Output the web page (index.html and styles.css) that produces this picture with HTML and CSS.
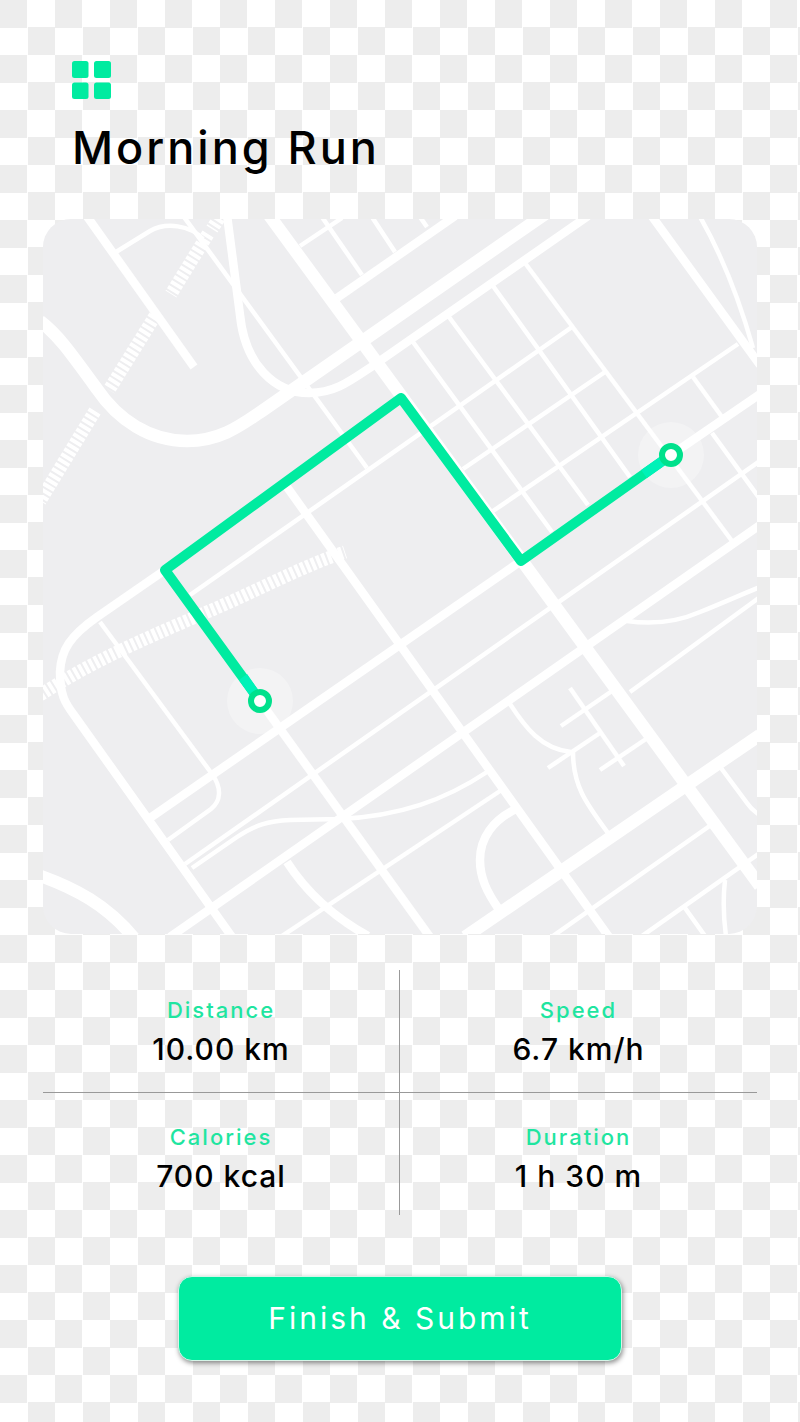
FILE: index.html
```html
<!DOCTYPE html>
<html lang="en">
<head>
<meta charset="utf-8">
<meta name="viewport" content="width=device-width, initial-scale=1">
<title>Morning Run</title>
<link rel="stylesheet" href="styles.css">
</head>
<body>
<main class="screen">
  <header class="header">
    <button class="menu" type="button" aria-label="Menu">
      <svg class="menu-icon" viewBox="0 0 40 39" aria-hidden="true">
        <rect x="0" y="0" width="16.500" height="17" rx="2.5"/>
        <rect x="22" y="0" width="17" height="17" rx="2.5"/>
        <rect x="0" y="21.500" width="16.500" height="16.500" rx="2.5"/>
        <rect x="22" y="21.500" width="17" height="16.500" rx="2.5"/>
      </svg>
    </button>
    <h1 class="title">Morning Run</h1>
  </header>

  <svg class="map" viewBox="43 219 714 715" role="img" aria-label="Route map">
    <g class="road minor">
      <path d="M116 252L150 231C166 222 190 225 203 239"/>
      <path d="M184 217L367 468"/>
      <path d="M300 246L342 218"/>
      <path d="M322 217L362 275"/>
      <path d="M372 217L395 252"/>
      <path d="M420 217L427 227"/>
      <path d="M413 342L552 532"/>
      <path d="M449 317L588 505"/>
      <path d="M493 286L630 477"/>
      <path d="M525 263L732 541"/>
      <path d="M190 595L572 327"/>
      <path d="M463 469L605 372"/>
      <path d="M493 511L738 344"/>
      <path d="M699 215C722 255 738 295 753 348"/>
      <path d="M693 377L722 417"/>
      <path d="M712 433L760 499"/>
      <path d="M185 864L760 461"/>
      <path d="M627 621C655 625 677 622 700 612C725 602 740 595 760 587"/>
      <path d="M630 692L760 597"/>
      <path d="M100 622L212 774C222 788 221 801 211 809L168 840"/>
      <path d="M192 868L237 837C255 825 268 821 290 820L340 819C400 816 445 800 487 772"/>
      <path d="M282 936L500 791"/>
      <path d="M510 704C525 727 541 749 571 752"/>
      <path d="M548 768L600 733"/>
      <path d="M570 688L624 766"/>
      <path d="M561 726L612 691"/>
      <path d="M600 770L646 739"/>
      <path d="M573 752C573 785 585 802 608 833"/>
      <path d="M721 768L747 803Q751 809 758 814"/>
      <path d="M553 936L711 825"/>
      <path d="M642 936L760 853"/>
      <path d="M685 908L705 936"/>
      <path d="M725 880Q722 907 726 936"/>
    </g>
    <g class="road main">
      <path d="M86 215L194 367"/>
      <path d="M227 215L240 315C245 365 275 393 309 393C335 393 350 381 374 365L588 216"/>
      <path d="M337 298L455 216"/>
      <path d="M651 215L760 365"/>
      <path d="M671 455L760 394"/>
      <path d="M170 937L760 525"/>
      <path d="M150 818L521 561"/>
      <path d="M287 487L609 937"/>
      <path d="M260 701L430 937"/>
      <path d="M165 570L97 617C70 636 61 650 60 672C60 695 65 703 74 715L232 937"/>
      <path d="M287 862C305 890 330 915 368 936"/>
      <path d="M516 809C493 820 480 838 480 860C480 878 487 892 498 908"/>
    </g>
    <g class="road major">
      <path d="M40 321C57 334 68 349 97 389C118 420 150 441 187 441C220 441 240 426 262 411L545 214"/>
      <path d="M269 215L760 886"/>
      <path d="M465 937L760 735"/>
      <path d="M38 875C75 888 107 905 134 938"/>
    </g>
    <g class="rail">
      <path d="M219 218L212 229"/>
      <path d="M208 234L171 294"/>
      <path d="M155 316L109 390"/>
      <path d="M95 411L40 501"/>
      <path d="M40 695C90 663 130 645 207 612C255 592 300 567 345 552"/>
    </g>
    <circle class="halo" cx="260" cy="701" r="33"/>
    <circle class="halo" cx="671" cy="455" r="33"/>
    <path class="route" d="M260 701L165 570L401 398L521 561L671 455"/>
    <path class="route route-end" d="M260 701L243 677M671 455L644 474"/>
    <circle class="stop" cx="260" cy="701" r="9"/>
    <circle class="stop" cx="671" cy="455" r="9"/>
  </svg>

  <dl class="stats">
    <div class="stat"><dt class="label">Distance</dt><dd class="value">10.00 km</dd></div>
    <div class="stat"><dt class="label">Speed</dt><dd class="value">6.7 km/h</dd></div>
    <div class="stat"><dt class="label">Calories</dt><dd class="value">700 kcal</dd></div>
    <div class="stat"><dt class="label">Duration</dt><dd class="value">1 h 30 m</dd></div>
  </dl>

  <button class="submit" type="button">Finish &amp; Submit</button>
</main>
</body>
</html>
```
FILE: styles.css
```css
* {
  box-sizing: border-box;
}

body {
  margin: 0;
  min-height: 100vh;
  font-family: Inter, "Liberation Sans", sans-serif;
  font-weight: 500;
  color: #000;
  background: repeating-conic-gradient(#fff 0 25%, #ededed 0 50%) 0 0 / 55px 55px;
}

.screen {
  display: flex;
  flex-direction: column;
  padding: 61px 43px;
}

.header {
  display: flex;
  flex-direction: column;
  align-items: flex-start;
  gap: 20px;
  padding: 0 29px;
  margin-bottom: 44px;
}

.menu {
  display: block;
  padding: 0;
  border: 0;
  background: none;
}

.menu-icon {
  display: block;
  width: 40px;
  height: 39px;
  fill: #00eba0;
}

.title {
  margin: 0;
  font-size: 45px;
  line-height: 55px;
  font-weight: 500;
  letter-spacing: 3px;
}

.map {
  display: block;
  width: 100%;
  border-radius: 28px;
  background: #eeeef0;
}

.road,
.rail {
  fill: none;
  stroke: #fff;
}

.minor {
  stroke-width: 4.5;
}

.main {
  stroke-width: 8.5;
}

.major {
  stroke-width: 12.5;
}

.rail {
  stroke-width: 13;
  stroke-dasharray: 3.8 2;
}

.halo {
  fill: #fff;
  fill-opacity: 0.3;
}

.route {
  fill: none;
  stroke: #00eba0;
  stroke-width: 10;
  stroke-linejoin: round;
}

.route-end {
  stroke: #00f2b8;
}

.stop {
  fill: #fff;
  stroke: #00e18c;
  stroke-width: 6;
}

.stats {
  display: grid;
  grid-template-columns: 1fr 1fr;
  margin: 36px 0 61px;
}

.stat {
  display: flex;
  flex-direction: column;
  align-items: center;
  gap: 4px;
  padding: 25px 0 22px;
}

.stat:nth-child(odd) {
  border-right: 1px solid #999;
}

.stat:nth-child(-n+2) {
  border-bottom: 1px solid #999;
}

.stat:nth-child(n+3) {
  padding: 29px 0 18px;
}

.label {
  font-size: 22px;
  line-height: 30px;
  letter-spacing: 2px;
  color: #1fe5a0;
}

.value {
  margin: 0;
  font-size: 30px;
  line-height: 41px;
  letter-spacing: 1px;
}

.submit {
  align-self: center;
  width: 100%;
  max-width: 444px;
  padding: 20px;
  border: 1px solid #d5f5e8;
  border-radius: 14px;
  background: #00eba0;
  box-shadow: 1px 2px 5px rgba(0, 0, 0, 0.45);
  font-family: inherit;
  font-size: 30px;
  line-height: 43px;
  font-weight: 400;
  letter-spacing: 3px;
  color: #fff;
}
```
